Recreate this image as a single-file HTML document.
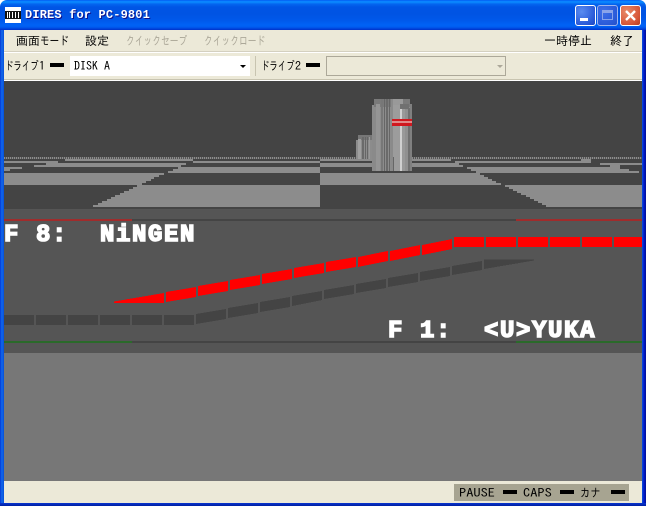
<!DOCTYPE html>
<html lang="ja">
<head>
<meta charset="utf-8">
<title>DIRES for PC-9801</title>
<style>
html,body{margin:0;padding:0;background:#fff}
body{width:646px;height:506px;overflow:hidden;position:relative;font-family:"IPAGothic","Liberation Sans","Noto Sans CJK JP",sans-serif;font-size:12px;color:#000}
#win{position:absolute;left:0;top:0;width:646px;height:506px;background:#ece9d8;border-radius:7px 7px 0 0;overflow:hidden}
#tb{position:absolute;left:0;top:0;width:646px;height:30px;background:linear-gradient(to bottom,#0058ee 0,#0a7bff 1px,#0a8cff 2px,#0466f0 4px,#0055e5 7px,#0054e3 14px,#0058ea 20px,#0062f5 25px,#005cf0 27px,#0040d8 29px,#0030c8 30px)}
#ti{position:absolute;left:25px;top:8px;color:#fff;font:bold 12px/14px "Liberation Mono",monospace;letter-spacing:.15px;text-shadow:1px 1px 0 #0f1089;white-space:nowrap}
.ic{position:absolute;left:5px;top:7px;width:16px;height:16px;background:#fff}
.ic i{position:absolute;left:0;top:4px;width:16px;height:8px;background:#111}
.ic b{position:absolute;top:5px;width:1px;height:6px;background:#fff}
.wb{position:absolute;top:5px;width:21px;height:21px;box-sizing:border-box;border:1px solid #fff;border-radius:3px}
.m{position:absolute;top:35px;line-height:12px;white-space:nowrap}
.g{color:#aca899}
.t{position:absolute;white-space:nowrap;line-height:12px}
.sx{display:inline-block;transform-origin:0 50%}
.led{position:absolute;background:#000}
.sep{position:absolute;left:0;width:646px;height:1px}
#bl,#br{position:absolute;top:30px;width:4px;height:476px}
#bl{left:0;background:linear-gradient(to right,#0831d9,#0855dd 1px,#166aee 2px,#0855dd 3px)}
#br{left:642px;background:linear-gradient(to right,#0855dd,#0735cf 1px,#0019cf 2px,#001090 4px)}
#bb{position:absolute;left:0;top:503px;width:646px;height:3px;background:linear-gradient(to bottom,#0735cf,#001ea0)}
svg{position:absolute;left:0;top:0}
svg text{font-family:"Liberation Mono",monospace;font-weight:bold;font-size:24px;fill:#fff;letter-spacing:1.6px;stroke:#fff;stroke-width:1.5px;white-space:pre}
</style>
</head>
<body>
<div id="win">
<div id="tb"></div>
<div class="ic"><i></i><b style="left:2px"></b><b style="left:4px"></b><b style="left:7px"></b><b style="left:10px"></b><b style="left:13px"></b></div>
<div id="ti">DIRES for PC-9801</div>

<div class="wb" style="left:575px;background:radial-gradient(circle at 30% 30%,#5a8cf0,#2a5ad8 70%,#1e46c0)"><div style="position:absolute;left:4px;top:12px;width:8px;height:3px;background:#fff"></div></div>
<div class="wb" style="left:597px;border-color:#9db4ee;background:radial-gradient(circle at 30% 30%,#3f6fe8,#2a5ad8 70%,#2450c8)"><div style="position:absolute;left:4px;top:4px;width:11px;height:10px;box-sizing:border-box;border:1px solid #8aa4ea;border-top-width:3px"></div></div>
<div class="wb" style="left:620px;background:radial-gradient(circle at 30% 30%,#e88a68,#d8583a 65%,#b83c1e)">
<svg width="19" height="19" style="left:0;top:0"><path d="M5 5 L14 14 M14 5 L5 14" stroke="#fff" stroke-width="2.4" fill="none"/></svg></div>

<div class="m" style="left:16px">画面<span class="sx" style="transform:scaleX(.8)">モード</span></div>
<div class="m" style="left:85px">設定</div>
<div class="m g" style="left:126px"><span class="sx" style="transform:scaleX(.73)">クイックセーブ</span></div>
<div class="m g" style="left:204px"><span class="sx" style="transform:scaleX(.73)">クイックロード</span></div>
<div class="m" style="left:544px">一時停止</div>
<div class="m" style="left:610px">終了</div>

<div class="sep" style="top:51px;background:#d4d0c0"></div>
<div class="sep" style="top:52px;background:#fff"></div>

<div class="t" style="left:5px;top:60px"><span class="sx" style="transform:scaleX(.7)">ドライブ</span></div>
<div class="t" style="left:39px;top:60px">1</div>
<div class="led" style="left:50px;top:63px;width:14px;height:4px"></div>
<div style="position:absolute;left:70px;top:56px;width:180px;height:20px;background:#fff"></div>
<div class="t" style="left:74px;top:60px">DISK A</div>
<div style="position:absolute;left:240px;top:65px;width:0;height:0;border:3px solid transparent;border-top:3px solid #000;border-bottom:0"></div>
<div style="position:absolute;left:255px;top:56px;width:1px;height:20px;background:#c8c4b0"></div>
<div class="t" style="left:261px;top:60px"><span class="sx" style="transform:scaleX(.7)">ドライブ</span></div>
<div class="t" style="left:295px;top:60px">2</div>
<div class="led" style="left:306px;top:63px;width:14px;height:4px"></div>
<div style="position:absolute;left:326px;top:56px;width:180px;height:20px;box-sizing:border-box;border:1px solid #aca899;background:#ece9d8"></div>
<div style="position:absolute;left:497px;top:65px;width:0;height:0;border:3px solid transparent;border-top:3px solid #aca899;border-bottom:0"></div>
<div class="sep" style="top:79px;background:#c8c4b0"></div>
<div class="sep" style="top:80px;background:#fff"></div>

<svg width="646" height="506" viewBox="0 0 646 506" shape-rendering="crispEdges">
<defs><pattern id="d" x="0" y="0" width="2" height="2" patternUnits="userSpaceOnUse"><rect width="1" height="2" fill="#8c8c8c"/><rect x="1" width="1" height="2" fill="#555"/></pattern></defs>
<rect x="4" y="81" width="638" height="128" fill="#444"/>
<rect x="4" y="209" width="638" height="144" fill="#555"/>
<rect x="4" y="353" width="638" height="128" fill="#777"/>
<rect x="4" y="157" width="638" height="2" fill="url(#d)"/>
<g fill="#8c8c8c">
<rect x="65" y="159" width="128" height="2"/>
<rect x="320" y="159" width="131" height="2"/>
<rect x="581" y="159" width="10" height="2"/>
<rect x="4" y="161" width="54" height="2"/>
<rect x="193" y="161" width="127" height="2"/>
<rect x="455" y="161" width="136" height="2"/>
<rect x="46" y="163" width="140" height="2"/>
<rect x="320" y="163" width="139" height="2"/>
<rect x="600" y="163" width="42" height="2"/>
<rect x="34" y="165" width="147" height="2"/>
<rect x="320" y="165" width="143" height="2"/>
<rect x="610" y="165" width="10" height="2"/>
<rect x="4" y="167" width="18" height="2"/>
<rect x="178" y="167" width="142" height="2"/>
<rect x="467" y="167" width="153" height="2"/>
<rect x="4" y="169" width="6" height="2"/>
<rect x="173" y="169" width="147" height="2"/>
<rect x="471" y="169" width="158" height="2"/>
<rect x="168" y="171" width="152" height="2"/>
<rect x="476" y="171" width="163" height="2"/>
<path d="M4 173H164V175H159V177H154V179H151V181H146V183H142V185H4Z"/>
<path d="M320 173H480V175H484V177H488V179H492V181H496V183H501V185H320Z"/>
<path d="M137 185H320V207H93V205H98V203H102V201H107V199H111V197H115V195H120V193H124V191H129V189H133V187H137Z"/>
<path d="M505 185H642V207H546V205H542V203H538V201H534V199H530V197H526V195H521V193H517V191H513V189H509V187H505Z"/>
</g>

<!-- small tower -->
<rect x="356" y="140" width="16" height="19" fill="#8c8c8c"/>
<rect x="358" y="135" width="14" height="5" fill="#777"/>
<rect x="358" y="139" width="3" height="20" fill="#a0a0a0"/>
<rect x="362" y="137" width="2" height="22" fill="#6a6a6a"/>
<rect x="365" y="137" width="1" height="22" fill="#666"/>
<rect x="367" y="137" width="1" height="22" fill="#666"/>
<rect x="369" y="137" width="1" height="22" fill="#999"/>
<!-- main tower -->
<rect x="372" y="105" width="40" height="66" fill="#8c8c8c"/>
<rect x="374" y="99" width="36" height="8" fill="#7a7a7a"/>
<rect x="376" y="104" width="4" height="67" fill="#959595"/>
<rect x="372" y="110" width="4" height="61" fill="#8a8a8a"/>
<rect x="381" y="99" width="2" height="72" fill="#777"/>
<rect x="384" y="99" width="1" height="72" fill="#666"/>
<rect x="386" y="99" width="2" height="72" fill="#6a6a6a"/>
<rect x="389" y="99" width="1" height="72" fill="#666"/>
<rect x="391" y="99" width="2" height="72" fill="#8a8a8a"/>
<rect x="393" y="105" width="7" height="66" fill="#9c9c9c"/>
<rect x="393" y="99" width="10" height="6" fill="#999"/>
<rect x="400" y="104" width="9" height="5" fill="#707070"/>
<rect x="393" y="157" width="1" height="14" fill="#666"/>
<rect x="400" y="109" width="2" height="62" fill="#d0d0d0"/>
<rect x="402" y="109" width="3" height="62" fill="#999"/>
<rect x="405" y="110" width="3" height="61" fill="#909090"/>
<rect x="408" y="108" width="2" height="63" fill="#707070"/>
<rect x="410" y="104" width="2" height="67" fill="#808080"/>
<rect x="392" y="119" width="20" height="2" fill="#d0181f"/>
<rect x="392" y="123" width="20" height="3" fill="#d0181f"/>
<rect x="392" y="121" width="20" height="2" fill="#e08a8a"/>

<!-- top lines -->
<rect x="4" y="219" width="638" height="2" fill="#444"/>
<rect x="4" y="219" width="128" height="2" fill="#a02c2c"/>
<rect x="516" y="219" width="126" height="2" fill="#a02c2c"/>
<rect x="4" y="341" width="638" height="2" fill="#444"/>
<rect x="4" y="341" width="128" height="2" fill="#2a6a2a"/>
<rect x="516" y="341" width="126" height="2" fill="#2a6a2a"/>

<!-- red road -->
<g fill="#f00">
<rect x="454" y="237" width="30" height="10"/>
<rect x="486" y="237" width="30" height="10"/>
<rect x="518" y="237" width="30" height="10"/>
<rect x="550" y="237" width="30" height="10"/>
<rect x="582" y="237" width="30" height="10"/>
<rect x="614" y="237" width="28" height="10"/>
<polygon points="114,301.5 164,293 164,303 114,303"/>
<polygon points="166,292 196,287 196,297 166,302"/>
<polygon points="198,286 228,281 228,291 198,296"/>
<polygon points="230,280 260,275 260,285 230,290"/>
<polygon points="262,274 292,269 292,279 262,284"/>
<polygon points="294,268 324,263 324,273 294,278"/>
<polygon points="326,262 356,257 356,267 326,272"/>
<polygon points="358,257 388,251 388,261 358,267"/>
<polygon points="390,251 420,245 420,255 390,261"/>
<polygon points="422,245 452,239 452,249 422,255"/>
</g>
<!-- dark road -->
<g fill="#444">
<rect x="4" y="315" width="30" height="10"/>
<rect x="36" y="315" width="30" height="10"/>
<rect x="68" y="315" width="30" height="10"/>
<rect x="100" y="315" width="30" height="10"/>
<rect x="132" y="315" width="30" height="10"/>
<rect x="164" y="315" width="30" height="10"/>
<polygon points="196,314 226,309 226,319 196,324"/>
<polygon points="228,308 258,303 258,313 228,318"/>
<polygon points="260,302 290,297 290,307 260,312"/>
<polygon points="292,296 322,291 322,300 292,306"/>
<polygon points="324,290 354,285 354,294 324,299"/>
<polygon points="356,284 386,279 386,288 356,293"/>
<polygon points="388,278 418,273 418,282 388,287"/>
<polygon points="420,272 450,267 450,276 420,281"/>
<polygon points="452,266 482,261 482,270 452,275"/>
<polygon points="484,259.5 534,259.5 534,260.5 484,269"/>
</g>
<text x="4" y="241" xml:space="preserve">F 8:  NiNGEN</text>
<text x="388" y="337" xml:space="preserve">F 1:  &lt;U&gt;YUKA</text>
</svg>

<div style="position:absolute;left:454px;top:484px;width:175px;height:17px;background:#a7a491"></div>
<div class="t" style="left:459px;top:487px"><span class="sx" style="transform:scaleX(1.2)">PAUSE</span></div>
<div class="led" style="left:503px;top:490px;width:14px;height:4px"></div>
<div class="t" style="left:523px;top:487px"><span class="sx" style="transform:scaleX(1.2)">CAPS</span></div>
<div class="led" style="left:560px;top:490px;width:14px;height:4px"></div>
<div class="t" style="left:580px;top:487px"><span class="sx" style="transform:scaleX(.85)">カナ</span></div>
<div class="led" style="left:611px;top:490px;width:14px;height:4px"></div>

<div id="bl"></div><div id="br"></div><div id="bb"></div>
</div>
</body>
</html>
